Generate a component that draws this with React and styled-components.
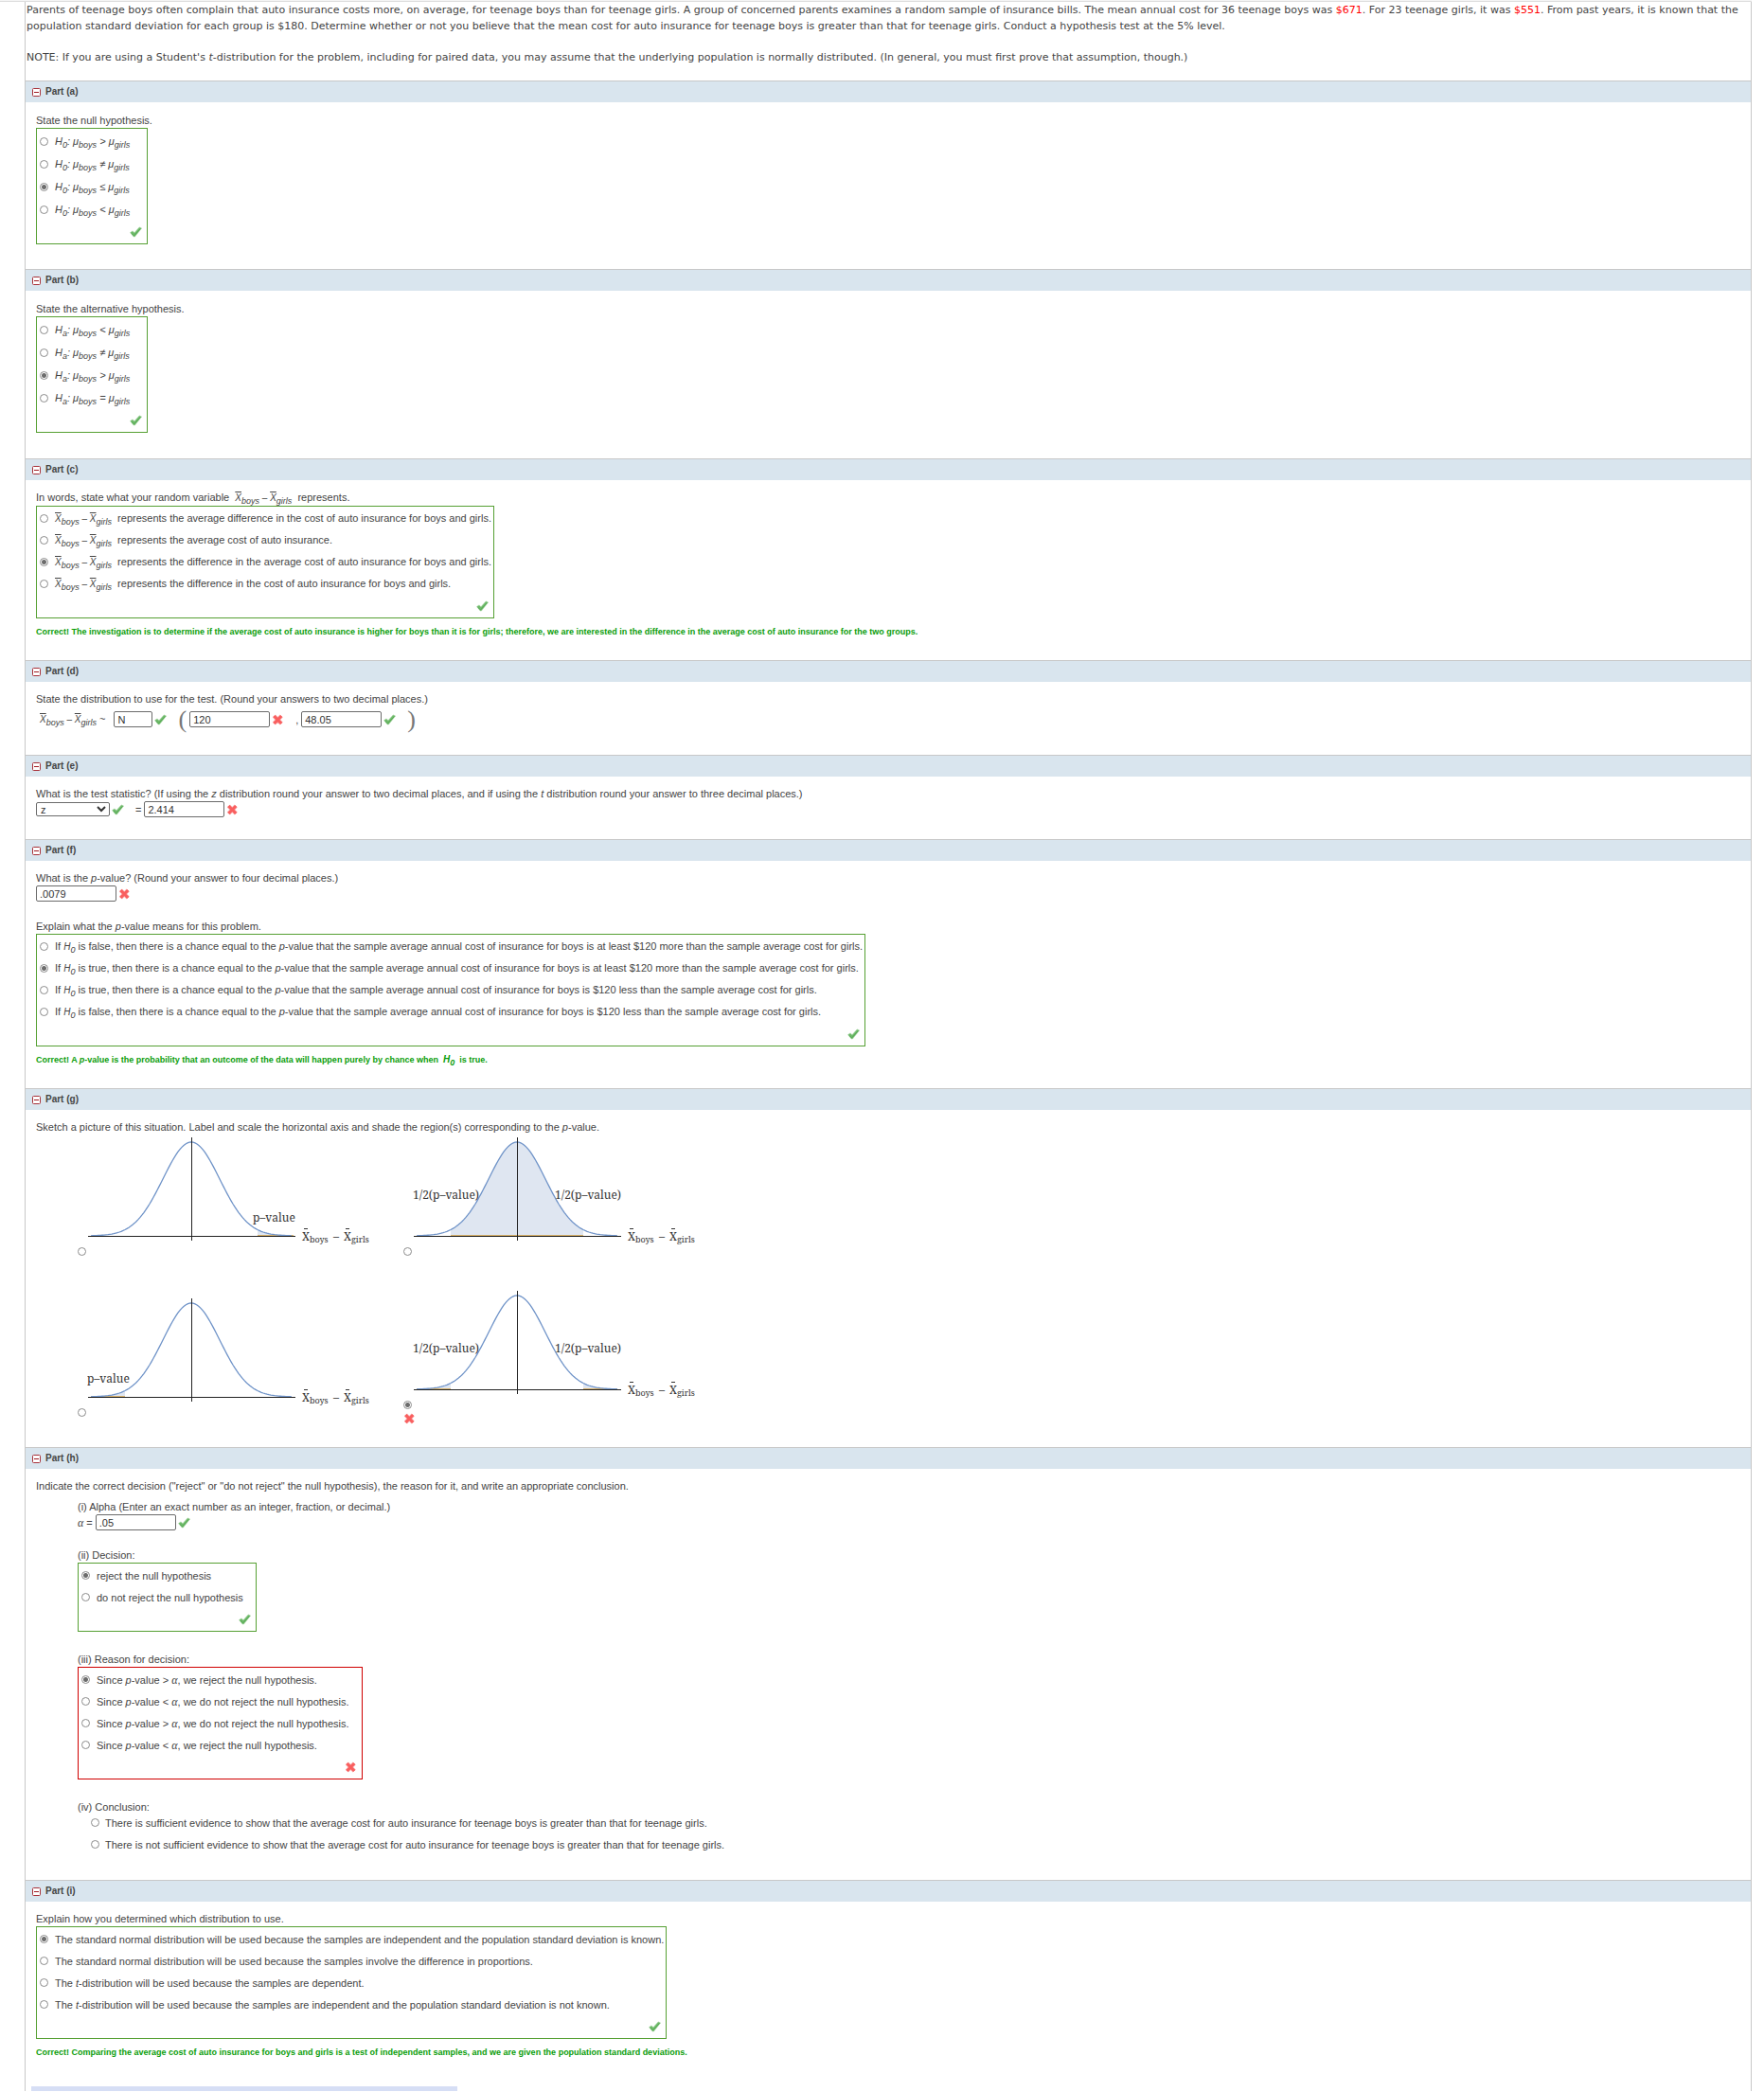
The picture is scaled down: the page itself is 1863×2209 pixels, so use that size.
import React, { useState } from "react";
import styled, { createGlobalStyle } from "styled-components";

const GlobalStyle = createGlobalStyle`
  * {
    box-sizing: border-box;
  }
  body {
    margin: 0;
    background: #fff;
    color: #444;
    font-family: "Liberation Sans", Arial, sans-serif;
    font-size: 11px;
    line-height: 16px;
  }
  p {
    margin: 0;
  }
`;

const Page = styled.main`
  padding-right: 13px;
`;

const TopRule = styled.div`
  height: 2px;
  background: #f5f5f5;
  border-bottom: 1px solid #ddd;
`;

const Question = styled.article`
  margin-left: 26px;
  border: 1px solid #c8c8c8;
  border-width: 0 1px;
`;

const Intro = styled.div`
  padding: 0 1px 16px;
  font-family: "DejaVu Sans", Verdana, sans-serif;
  font-size: 11px;
  line-height: 17px;

  p + p {
    margin-top: 16px;
  }
`;

const Amount = styled.span`
  color: #f00;
`;

const PartHeader = styled.h2`
  display: flex;
  align-items: center;
  gap: 5px;
  height: 23px;
  margin: 0;
  padding-left: 7px;
  border-top: 1px solid #c8c8c8;
  background: #d9e5ee;
  font-size: 10px;
  font-weight: bold;
`;

const Toggle = styled.button`
  display: block;
  width: 9px;
  height: 9px;
  padding: 0;
  border: 0;
  background: none;

  svg {
    display: block;
  }
`;

const PartBody = styled.div`
  padding: ${(props) => props.$top || 10}px 11px ${(props) => props.$bottom || 27}px;
`;

const AnswerBox = styled.div`
  width: fit-content;
  padding: 1px 0 0 3px;
  border: 1px solid ${(props) => (props.$wrong ? "#d00000" : "#56a033")};
`;

const PlainBox = styled.div`
  display: grid;
  gap: 6px;
  padding-left: 14px;
`;

const Option = styled.label`
  display: flex;
  align-items: center;
  gap: ${(props) => props.$gap || 7}px;
  height: ${(props) => props.$height || 23}px;
  padding-right: ${(props) => props.$trail || 0}px;
  white-space: nowrap;
`;

const Radio = styled.input`
  appearance: none;
  flex: none;
  width: 9px;
  height: 9px;
  margin: 0;
  border: 1px solid #8c8c8c;
  border-radius: 50%;
  background: #fff;

  &:checked {
    background: radial-gradient(circle, #6c6c6c 0 2px, #fff 3px);
  }
`;

const BoxFooter = styled.div`
  display: flex;
  align-items: center;
  justify-content: flex-end;
  height: 24px;
  padding-right: 5px;
`;

const MarkIcon = styled.svg`
  display: block;
  flex: none;
  width: 13px;
  height: 12px;
`;

const Feedback = styled.p`
  padding-top: 6px;
  color: #0a9d0a;
  font-size: 9px;
  font-weight: bold;
`;

const Formula = styled.span`
  font-size: ${(props) => (props.$large ? 11 : 10)}px;
  font-style: italic;
`;

const Sub = styled.sub`
  font-size: 9px;
  line-height: 0;
  vertical-align: -3px;
`;

const Bar = styled.span`
  text-decoration: overline;
`;

const Serif = styled.i`
  font-family: "Liberation Serif", serif;
  font-size: 12px;
  line-height: 0;
`;

const Row = styled.div`
  display: flex;
  align-items: center;
  gap: 3px;
`;

const DistributionRow = styled(Row)`
  height: 27px;
  padding-left: 4px;
`;

const Variable = styled.span`
  padding-right: 6px;
`;

const Answer = styled.span`
  display: inline-flex;
  align-items: center;
  gap: 2px;
  margin-right: 9px;
`;

const TextInput = styled.input`
  width: ${(props) => (props.$short ? 41 : 85)}px;
  height: 17px;
  padding: 0 3px;
  border: 1px solid #6b6b6b;
  border-radius: 2px;
  color: #333;
  font: 11px "Liberation Sans", Arial, sans-serif;
`;

const Select = styled.select`
  width: 78px;
  height: 15px;
  padding: 0;
  border: 1px solid #6b6b6b;
  border-radius: 2px;
  background: #fff;
  color: #333;
  font: 11px "Liberation Sans", Arial, sans-serif;
`;

const Paren = styled.span`
  color: #777;
  font-family: "Liberation Serif", serif;
  font-size: 26px;
`;

const Spaced = styled.div`
  margin-top: ${(props) => props.$top}px;
`;

const Indent = styled.div`
  padding-left: 44px;
`;

const ChartGrid = styled.div`
  display: grid;
  grid-template-columns: max-content max-content;
  align-items: center;
  gap: 37px 34px;
  padding: 3px 0 0 44px;
`;

const ChartOption = styled.label`
  display: flex;
  align-items: flex-end;
  gap: 1px;
`;

const Chart = styled.svg`
  display: block;
  width: 300px;
  height: 125px;
  font-family: "Noto Serif", "DejaVu Serif", serif;
  font-size: 12px;
  fill: #333;
`;

const BottomBar = styled.div`
  width: 450px;
  max-width: 100%;
  height: 5px;
  margin-left: 6px;
  background: #d6def5;
`;

function Mark({ wrong }) {
  if (wrong) {
    return (
      <MarkIcon viewBox="0 0 13 12" role="img" aria-label="Incorrect">
        <path d="M2.4 2 10.2 10M10.2 2 2.4 10" stroke="#f9b4b4" strokeWidth="4.4" />
        <path d="M2.4 2 10.2 10M10.2 2 2.4 10" stroke="#f95f5f" strokeWidth="3.2" />
      </MarkIcon>
    );
  }
  return (
    <MarkIcon viewBox="0 0 13 12" role="img" aria-label="Correct">
      <path
        d="M.6 6.6 3 4.9l2 1.8L10.2.9 12.6 2 5.4 11H4.2z"
        fill="#6fba6b"
        stroke="#a3d3a0"
        strokeWidth=".6"
      />
      <path d="M1.6 7.4 4.6 9.8 11.4 2.6" fill="none" stroke="#58a955" />
    </MarkIcon>
  );
}

function Part({ letter, top, bottom, children }) {
  const [open, setOpen] = useState(true);

  return (
    <section>
      <PartHeader>
        <Toggle
          type="button"
          aria-label={`Toggle part ${letter}`}
          aria-expanded={open}
          onClick={() => setOpen(!open)}
        >
          <svg width="9" height="9" viewBox="0 0 9 9">
            <rect x=".5" y=".5" width="8" height="8" rx="1" fill="#fff" stroke="#a8323a" />
            <path d="M2 4.5h5" stroke="#a01c24" />
          </svg>
        </Toggle>
        <span>Part ({letter})</span>
      </PartHeader>
      {open && (
        <PartBody $top={top} $bottom={bottom}>
          {children}
        </PartBody>
      )}
    </section>
  );
}

function Options({ name, items, checked, height, trail, gap }) {
  const [value, setValue] = useState(checked);

  return items.map((item, i) => (
    <Option key={i} $height={height} $trail={trail} $gap={gap}>
      <Radio type="radio" name={name} checked={value === i} onChange={() => setValue(i)} />
      <span>{item}</span>
    </Option>
  ));
}

function Choice({ wrong, ...rest }) {
  return (
    <AnswerBox $wrong={wrong}>
      <Options {...rest} />
      <BoxFooter>
        <Mark wrong={wrong} />
      </BoxFooter>
    </AnswerBox>
  );
}

const Hypothesis = ({ index, sign }) => (
  <Formula $large>
    H<Sub>{index}</Sub>: μ<Sub>boys</Sub> {sign} μ<Sub>girls</Sub>
  </Formula>
);

const MeanDiff = () => (
  <Formula>
    <Bar>X</Bar>
    <Sub>boys</Sub> – <Bar>X</Bar>
    <Sub>girls</Sub>
  </Formula>
);

const HZero = () => (
  <Formula>
    H<Sub>0</Sub>
  </Formula>
);

// bell curve, centred on x = 110 with the axis at y = 104
const curveY = (x) => 104 - 99 * Math.exp(-((x - 110) ** 2) / (2 * 30 * 30));

const curvePoints = (from, to) => {
  const points = [];
  for (let x = from; x <= to; x += 2) {
    points.push(`${x} ${curveY(x).toFixed(2)}`);
  }
  return points.join("L");
};

function BellCurve({ shaded, labels }) {
  return (
    <Chart viewBox="0 0 300 125">
      {shaded.map(([from, to]) => (
        <g key={from}>
          <path d={`M${from} 104L${curvePoints(from, to)}L${to} 104z`} fill="#dfe6f1" />
          <path d={`M${from} 103.5H${to}`} stroke="#d9b26a" />
        </g>
      ))}
      <path d={`M${curvePoints(4, 216)}`} fill="none" stroke="#6f93c8" strokeWidth="1.3" />
      <path d="M1 104.5H220M110.5 0V109" stroke="#222" />
      {labels.map(([x, y, text]) => (
        <text key={x} x={x} y={y}>
          {text}
        </text>
      ))}
      <path d="M229 96.5h4M273 96.5h4" stroke="#333" />
      <text x="227" y="109">X</text>
      <text x="235" y="111" fontSize="9">boys</text>
      <text x="260" y="109">–</text>
      <text x="271" y="109">X</text>
      <text x="279" y="111" fontSize="9">girls</text>
    </Chart>
  );
}

const halves = [
  [0, 65, "1/2(p–value)"],
  [150, 65, "1/2(p–value)"],
];

const charts = [
  { shaded: [[180, 218]], labels: [[175, 89, "p–value"]] },
  { shaded: [[40, 180]], labels: halves },
  { shaded: [[4, 40]], labels: [[0, 89, "p–value"]] },
  { shaded: [[4, 40], [180, 216]], labels: halves, wrong: true },
];

function Sketches() {
  const [value, setValue] = useState(3);

  return (
    <ChartGrid>
      {charts.map((chart, i) => (
        <div key={i}>
          <ChartOption>
            <Radio
              type="radio"
              name="sketch"
              checked={value === i}
              onChange={() => setValue(i)}
            />
            <BellCurve shaded={chart.shaded} labels={chart.labels} />
          </ChartOption>
          {chart.wrong && (
            <Spaced $top={4}>
              <Mark wrong />
            </Spaced>
          )}
        </div>
      ))}
    </ChartGrid>
  );
}

const Field = ({ label, value, short, wrong }) => (
  <Answer>
    <TextInput aria-label={label} defaultValue={value} $short={short} />
    <Mark wrong={wrong} />
  </Answer>
);

const pMeaning = (truth, amount) => (
  <>
    If <HZero /> is {truth}, then there is a chance equal to the <i>p</i>-value that the
    sample average annual cost of insurance for boys is {amount} than the sample average
    cost for girls.
  </>
);

const reason = (sign, text) => (
  <>
    Since <i>p</i>-value {sign} <Serif>α</Serif>, we {text} the null hypothesis.
  </>
);

const meanDiffItem = (text) => (
  <>
    <MeanDiff />
    &nbsp; represents the {text}
  </>
);

function App() {
  return (
    <Page>
      <GlobalStyle />
      <TopRule />
      <Question>
        <Intro>
          <p>
            Parents of teenage boys often complain that auto insurance costs more, on
            average, for teenage boys than for teenage girls. A group of concerned parents
            examines a random sample of insurance bills. The mean annual cost for 36 teenage
            boys was <Amount>$671</Amount>. For 23 teenage girls, it was{" "}
            <Amount>$551</Amount>. From past years, it is known that the{" "}
            <span>
              population standard deviation for each group is $180. Determine whether or not
              you believe that the mean cost for auto insurance for teenage boys is greater
              than that for teenage girls. Conduct a hypothesis test at the 5% level.
            </span>
          </p>
          <p>
            NOTE: If you are using a Student's <i>t</i>-distribution for the problem,
            including for paired data, you may assume that the underlying population is
            normally distributed. (In general, you must first prove that assumption, though.)
          </p>
        </Intro>

        <Part letter="a" top={11} bottom={26}>
          <p>State the null hypothesis.</p>
          <Choice
            name="null"
            checked={2}
            height={24}
            trail={18}
            items={[">", "≠", "≤", "<"].map((sign) => (
              <Hypothesis index="0" sign={sign} />
            ))}
          />
        </Part>

        <Part letter="b" top={11}>
          <p>State the alternative hypothesis.</p>
          <Choice
            name="alternative"
            checked={2}
            height={24}
            trail={18}
            items={["<", "≠", ">", "="].map((sign) => (
              <Hypothesis index="a" sign={sign} />
            ))}
          />
        </Part>

        <Part letter="c" bottom={22}>
          <p>
            In words, state what your random variable &nbsp;
            <MeanDiff />
            &nbsp; represents.
          </p>
          <Choice
            name="variable"
            checked={2}
            trail={2}
            items={[
              meanDiffItem("average difference in the cost of auto insurance for boys and girls."),
              meanDiffItem("average cost of auto insurance."),
              meanDiffItem("difference in the average cost of auto insurance for boys and girls."),
              meanDiffItem("difference in the cost of auto insurance for boys and girls."),
            ]}
          />
          <Feedback>
            Correct! The investigation is to determine if the average cost of auto insurance
            is higher for boys than it is for girls; therefore, we are interested in the
            difference in the average cost of auto insurance for the two groups.
          </Feedback>
        </Part>

        <Part letter="d" bottom={24}>
          <p>State the distribution to use for the test. (Round your answers to two decimal places.)</p>
          <DistributionRow>
            <Variable>
              <MeanDiff /> ~
            </Variable>
            <Field label="Distribution" value="N" short />
            <Paren>(</Paren>
            <Field label="Mean" value="120" wrong />
            <span>,</span>
            <Field label="Standard deviation" value="48.05" />
            <Paren>)</Paren>
          </DistributionRow>
        </Part>

        <Part letter="e" bottom={23}>
          <p>
            What is the test statistic? (If using the <i>z</i> distribution round your answer
            to two decimal places, and if using the <i>t</i> distribution round your answer to
            three decimal places.)
          </p>
          <Row>
            <Answer>
              <Select aria-label="Statistic" defaultValue="z">
                <option value="z">z</option>
                <option value="t">t</option>
              </Select>
              <Mark />
            </Answer>
            <span>=</span>
            <Field label="Test statistic" value="2.414" wrong />
          </Row>
        </Part>

        <Part letter="f" bottom={22}>
          <p>
            What is the <i>p</i>-value? (Round your answer to four decimal places.)
          </p>
          <Row>
            <Field label="p-value" value=".0079" wrong />
          </Row>
          <Spaced $top={18}>
            <p>
              Explain what the <i>p</i>-value means for this problem.
            </p>
            <Choice
              name="meaning"
              checked={1}
              trail={2}
              items={[
                pMeaning("false", "at least $120 more"),
                pMeaning("true", "at least $120 more"),
                pMeaning("true", "$120 less"),
                pMeaning("false", "$120 less"),
              ]}
            />
          </Spaced>
          <Feedback>
            Correct! A <i>p</i>-value is the probability that an outcome of the data will
            happen purely by chance when &nbsp;
            <HZero />
            &nbsp; is true.
          </Feedback>
        </Part>

        <Part letter="g" bottom={24}>
          <p>
            Sketch a picture of this situation. Label and scale the horizontal axis and shade
            the region(s) corresponding to the <i>p</i>-value.
          </p>
          <Sketches />
        </Part>

        <Part letter="h" bottom={29}>
          <p>
            Indicate the correct decision ("reject" or "do not reject" the null hypothesis),
            the reason for it, and write an appropriate conclusion.
          </p>
          <Indent>
            <Spaced $top={6}>
              <p>(i) Alpha (Enter an exact number as an integer, fraction, or decimal.)</p>
              <Row>
                <span>
                  <Serif>α</Serif> =
                </span>
                <Field label="Alpha" value=".05" />
              </Row>
            </Spaced>
            <Spaced $top={18}>
              <p>(ii) Decision:</p>
              <Choice
                name="decision"
                checked={0}
                trail={13}
                items={["reject the null hypothesis", "do not reject the null hypothesis"]}
              />
            </Spaced>
            <Spaced $top={21}>
              <p>(iii) Reason for decision:</p>
              <Choice
                wrong
                name="reason"
                checked={0}
                trail={13}
                items={[
                  reason(">", "reject"),
                  reason("<", "do not reject"),
                  reason(">", "do not reject"),
                  reason("<", "reject"),
                ]}
              />
            </Spaced>
            <Spaced $top={21}>
              <p>(iv) Conclusion:</p>
              <PlainBox>
                <Options
                  name="conclusion"
                  height={17}
                  gap={6}
                  items={[
                    "There is sufficient evidence to show that the average cost for auto insurance for teenage boys is greater than that for teenage girls.",
                    "There is not sufficient evidence to show that the average cost for auto insurance for teenage boys is greater than that for teenage girls.",
                  ]}
                />
              </PlainBox>
            </Spaced>
          </Indent>
        </Part>

        <Part letter="i" bottom={28}>
          <p>Explain how you determined which distribution to use.</p>
          <Choice
            name="explain"
            checked={0}
            trail={2}
            items={[
              "The standard normal distribution will be used because the samples are independent and the population standard deviation is known.",
              "The standard normal distribution will be used because the samples involve the difference in proportions.",
              <>
                The <i>t</i>-distribution will be used because the samples are dependent.
              </>,
              <>
                The <i>t</i>-distribution will be used because the samples are independent and
                the population standard deviation is not known.
              </>,
            ]}
          />
          <Feedback>
            Correct! Comparing the average cost of auto insurance for boys and girls is a test
            of independent samples, and we are given the population standard deviations.
          </Feedback>
        </Part>
        <BottomBar />
      </Question>
    </Page>
  );
}

export default App;
